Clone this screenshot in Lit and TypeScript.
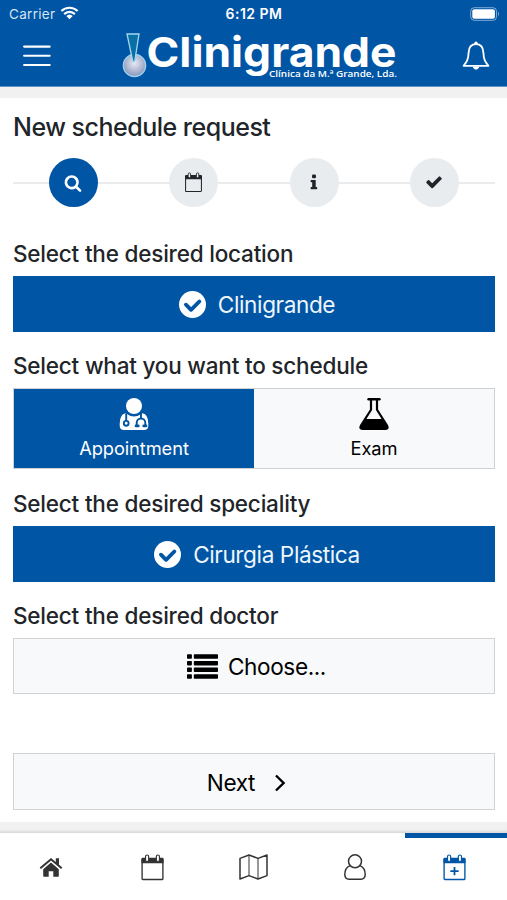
import { LitElement, html, css, svg, nothing } from "lit";
import { customElement, property } from "lit/decorators.js";
import { classMap } from "lit/directives/class-map.js";

const BLUE = "#0055a5";

const calendar = (plus: boolean) => svg`
  <path d="M2 5.5h20v18.2a.8.8 0 0 1-.8.8H2.8a.8.8 0 0 1-.8-.8z" fill="none" stroke="currentColor" stroke-width="1.3"/>
  <path d="M1.4 4.6Q1.4 3.6 2.4 3.6H21.6Q22.6 3.6 22.6 4.6V9H1.4z" fill="currentColor"/>
  <rect x="5.3" y="1" width="3" height="6.2" rx="1.5" fill="var(--hole, #fff)" stroke="currentColor" stroke-width="1.1"/>
  <rect x="15.7" y="1" width="3" height="6.2" rx="1.5" fill="var(--hole, #fff)" stroke="currentColor" stroke-width="1.1"/>
  ${plus ? svg`<path d="M12 12.4v8M8 16.4h8" stroke="currentColor" stroke-width="1.7"/>` : nothing}`;

const icons: Record<string, [string, unknown]> = {
  menu: ["0 0 28 24", svg`<path d="M1.1 2.6h25.6M1.1 11.8h25.6M1.1 21h25.6" stroke="currentColor" stroke-width="2.1" stroke-linecap="round"/>`],
  bell: ["0 0 28 30", svg`
    <path d="M11.2 26a2.9 2.9 0 0 0 5.6 0z" fill="currentColor" stroke="currentColor"/>
    <path d="M14 3.2c-5 0-7.2 3.9-7.4 8.4-.2 7-1.9 9.6-5 13.2h24.8c-3.1-3.6-4.8-6.2-5-13.2-.2-4.5-2.4-8.4-7.4-8.4z" fill="none" stroke="currentColor" stroke-width="1.8" stroke-linejoin="round"/>
    <circle cx="14" cy="2.3" r="1.7" fill="currentColor"/>`],
  wifi: ["0 0 20 15", svg`
    <path d="M1.3 5.4a12.4 12.4 0 0 1 17.4 0M4.3 8.7a8.1 8.1 0 0 1 11.4 0" fill="none" stroke="currentColor" stroke-width="2.3"/>
    <path d="M10 14.2l-3.4-3.5a4.9 4.9 0 0 1 6.8 0z" fill="currentColor"/>`],
  battery: ["0 0 30 14", svg`
    <rect x=".7" y=".7" width="25.8" height="12.6" rx="3.6" fill="none" stroke="#fff" stroke-opacity=".5"/>
    <rect x="2.3" y="2.3" width="22.6" height="9.4" rx="2" fill="#fff"/>
    <path d="M28 4.8q2 2.2 0 4.4z" fill="#fff" fill-opacity=".5"/>`],
  search: ["0 0 1792 1792", svg`<path fill="currentColor" d="M1216 832q0-185-131.5-316.5T768 384 451.5 515.5 320 832t131.5 316.5T768 1280t316.5-131.5T1216 832zm512 832q0 52-38 90t-90 38q-54 0-90-38l-343-342q-179 124-399 124-143 0-273.5-55.5t-225-150-150-225T64 832t55.5-273.5 150-225 225-150T768 128t273.5 55.5 225 150 150 225T1472 832q0 220-124 399l343 343q37 37 37 90z"/>`],
  calendar: ["0 0 24 25", calendar(false)],
  calendarPlus: ["0 0 24 25", calendar(true)],
  info: ["0 0 8 16", svg`<rect x="2" y=".6" width="4" height="3.6" rx="1.2" fill="currentColor"/><path d="M1.2 6h4.5v7h.9q.6 0 .6.6v1q0 .6-.6.6H1.2q-.6 0-.6-.6v-1q0-.6.6-.6h1V8.2h-1q-.6 0-.6-.6v-1q0-.6.6-.6z" fill="currentColor"/>`],
  check: ["0 0 1792 1792", svg`<path fill="currentColor" d="M1671 566q0 40-28 68l-724 724-136 136q-28 28-68 28t-68-28l-136-136-362-362q-28-28-28-68t28-68l136-136q28-28 68-28t68 28l294 295 656-657q28-28 68-28t68 28l136 136q28 28 28 68z"/>`],
  checkCircle: ["0 0 26 26", svg`<circle cx="13" cy="13" r="13" fill="currentColor"/><path d="M6.7 13.2l4.9 4.9 8-8" fill="none" stroke="${BLUE}" stroke-width="3.7" stroke-linecap="round" stroke-linejoin="round"/>`],
  doctor: ["0 0 30 32", svg`
    <path d="M6.5 15.3Q.7 16.5.7 25.5v2.3Q.7 32 5 32h20q4.3 0 4.3-4.2v-2.3q0-9-5.8-10.2Q15 21.5 6.5 15.3z" fill="currentColor"/>
    <circle cx="15" cy="8" r="8" fill="currentColor"/>
    <path d="M7.2 15.5v7.5" stroke="${BLUE}" stroke-width="1.9"/>
    <circle cx="7.2" cy="25.3" r="2.4" fill="currentColor" stroke="${BLUE}" stroke-width="1.9"/>
    <path d="M22 15v5.5M17.7 28v-3.2a4.3 4.3 0 0 1 8.6 0V28" fill="none" stroke="${BLUE}" stroke-width="1.9"/>
    <path d="M17 27.9h2.3M24.7 27.9H27" stroke="${BLUE}" stroke-width="2.7" stroke-linecap="round"/>`],
  flask: ["0 0 30 32", svg`
    <path d="M9.5 1.2h11" stroke="currentColor" stroke-width="2.4" stroke-linecap="round"/>
    <path d="M12 2v9.8L2 27.5Q.3 30.8 3.4 30.8h23.2q3.1 0 1.4-3.3L18 11.8V2" fill="none" stroke="currentColor" stroke-width="2.2"/>
    <path d="M6.8 21h16.4l5 7.6q.8 2.4-1.6 2.4H3.4Q1 31 1.8 28.6z" fill="currentColor"/>`],
  list: ["0 0 31 25", svg`${[0.2, 6.9, 13.6, 20.3].map((y) => svg`<rect x="0" y=${y} width="4.9" height="4.5" rx=".8" fill="currentColor"/><rect x="6.8" y=${y} width="24.2" height="4.5" rx=".8" fill="currentColor"/>`)}`],
  chevron: ["0 0 12 18", svg`<path d="M2 1.5L9.6 9 2 16.5" fill="none" stroke="currentColor" stroke-width="2.4"/>`],
  home: ["0 0 24 20", svg`
    <path d="M12 5.6l7.8 6.6V19q0 .8-.8.8h-4.7v-5.6H9.7v5.6H5q-.8 0-.8-.8v-6.8z" fill="currentColor"/>
    <path d="M1.3 11.2L12 2.2l10.7 9" fill="none" stroke="currentColor" stroke-width="2"/>
    <path d="M16.8 1.2h3.2v7.2l-3.2-2.7z" fill="currentColor"/>`],
  map: ["0 0 29 26", svg`
    <path d="M1 4.4L10 1l9 3.4L28 1v20.6L19 25l-9-3.4L1 25z" fill="none" stroke="currentColor" stroke-width="1.5" stroke-linejoin="round"/>
    <path d="M10 1v20.6M19 4.4V25" stroke="currentColor" stroke-width="1"/>`],
  person: ["0 0 22 26", svg`
    <circle cx="11" cy="7.3" r="6.5" fill="none" stroke="currentColor" stroke-width="1.5"/>
    <path d="M6 11.6Q.8 13.6.8 20.8 1 25.2 5 25.2h12q4 0 4.2-4.4 0-7.2-5.2-9.2" fill="none" stroke="currentColor" stroke-width="1.5"/>`],
};

@customElement("ui-icon")
class UiIcon extends LitElement {
  @property() name = "";
  static styles = css`
    :host { display: block; flex: none; }
    svg { display: block; width: 100%; height: 100%; overflow: visible; }
  `;
  render() {
    const [box, body] = icons[this.name];
    return html`<svg viewBox=${box}>${body}</svg>`;
  }
}

@customElement("app-root")
class AppRoot extends LitElement {
  static styles = css`
    :host {
      display: flex; flex-direction: column; width: 507px; height: 900px; overflow: hidden;
      background: #fff; color: #212529; font-family: Inter, "Liberation Sans", sans-serif;
    }
    * { box-sizing: border-box; }
    header { flex: none; height: 87px; background: #0055a5; color: #fff; border-bottom: 1px solid #5c93c6; }
    .status { display: grid; grid-template-columns: 1fr auto 1fr; align-items: center; height: 27px; padding: 0 7px 0 9px; font-size: 13.5px; }
    .carrier { display: flex; align-items: center; gap: 5px; color: #d3e4f3; letter-spacing: 0.3px; }
    .time { font-weight: 600; font-size: 14px; letter-spacing: 0.5px; margin-right: 1px; }
    .wifi { width: 19px; height: 14px; color: #fff; margin-top: -2px; }
    .battery { width: 30px; height: 14px; justify-self: end; }
    .bar { display: flex; justify-content: space-between; align-items: center; height: 58px; padding: 0 17px 0 23px; }
    .menu { width: 28px; height: 24px; }
    .bell { width: 28px; height: 30px; margin-top: -1px; }
    .logo { width: 276px; height: 48px; overflow: visible; margin: 0 0 3px 7px; }
    .word { font: 700 41px Inter, sans-serif; fill: #fff; }
    .sub { font: 600 9.5px "Open Sans", sans-serif; fill: #fff; }
    .strip { flex: none; height: 11px; background: #f1f1f1; }
    main { flex: none; height: 724px; padding: 13px 12px 0 13px; }
    h1 { margin: 0; height: 32px; font-size: 25px; line-height: 32px; font-weight: 500; letter-spacing: -0.5px; white-space: nowrap; }
    .steps { display: grid; grid-template-columns: repeat(4, 1fr); justify-items: center; margin-top: 15px; height: 49px;
      background: linear-gradient(#e9ebed, #e9ebed) 0 24px / 100% 2px no-repeat; }
    .step { display: grid; place-items: center; width: 49px; height: 49px; border-radius: 50%; background: #e9ecef; --hole: #e9ecef; }
    .step.on { background: #0055a5; color: #fff; }
    .s-search { width: 18px; height: 18px; }
    .s-calendar { width: 19px; height: 20px; margin-top: -2px; }
    .s-info { width: 8px; height: 16px; margin-top: -2px; }
    .s-check { width: 18px; height: 18px; margin: -2px 2px 0 0; }
    h2 { margin: 0 0 8px; height: 30px; font-size: 22.5px; line-height: 31px; font-weight: 500; white-space: nowrap; letter-spacing: -0.2px; }
    .s1 { margin-top: 31px; }
    .s2 { margin-top: 18px; }
    .s3 { margin-top: 19px; }
    .s4 { margin-top: 18px; }
    .btn { display: flex; align-items: center; justify-content: center; height: 56px; padding: 1px 0 0 5px; background: #f8f9fa; border: 1px solid #cfd1d3; color: #000; font-size: 22.6px; letter-spacing: -0.4px; white-space: nowrap; }
    .btn.on { padding-left: 6px; background: #0055a5; border-color: #0055a5; color: #eef6fc; }
    .tick { width: 27px; height: 27px; color: #fff; margin-right: 12px; }
    .list { width: 31px; height: 25px; margin-right: 10px; }
    .chev { width: 12px; height: 18px; margin-left: 19px; margin-top: 2px; }
    .next { margin-top: 59px; height: 57px; padding: 1px 15px 0 0; }
    .pair { display: grid; grid-template-columns: 1fr 1fr; height: 81px; border: 1px solid #cfd1d3; }
    .opt { display: flex; flex-direction: column; align-items: center; padding-top: 9px; background: #f8f9fa; color: #000; font-size: 18.3px; letter-spacing: -0.1px; line-height: 24px; }
    .opt.on { background: #0055a5; color: #fff; }
    .opt ui-icon { width: 30px; height: 32px; margin-bottom: 6px; }
    .strip.low { height: 11px; background: linear-gradient(#f1f1f1 65%, #d9d9d9); }
    nav { flex: 1; display: grid; grid-template-columns: repeat(4, 101.2px) 1fr; color: #333; background: #fff; }
    .tab { display: grid; place-items: center; border-top: 5px solid transparent; padding: 0 0 5px 1.5px; }
    .tab.on { color: #0055a5; border-color: #0055a5; padding: 0 2px 5px 0; }
    .t-home { width: 24px; height: 20px; }
    .t-calendar, .t-calendarPlus { width: 25px; height: 26px; }
    .t-map { width: 29px; height: 26px; }
    .t-person { width: 22px; height: 26px; }
  `;

  render() {
    return html`
      <header>
        <div class="status">
          <span class="carrier"><span>Carrier</span><ui-icon class="wifi" name="wifi"></ui-icon></span>
          <span class="time">6:12 PM</span>
          <ui-icon class="battery" name="battery"></ui-icon>
        </div>
        <div class="bar">
          <ui-icon class="menu" name="menu"></ui-icon>
          <svg class="logo" viewBox="0 0 276 48">
            <defs>
              <radialGradient id="ball" cx=".5" cy=".4" r=".6">
                <stop offset="0" stop-color="#e9e9f1"/><stop offset="1" stop-color="#8795bb"/>
              </radialGradient>
            </defs>
            <circle cx="12.5" cy="34.5" r="11.2" fill="url(#ball)" stroke="#9ed5ee" stroke-width="1.2"/>
            <path d="M5 3h12L12.7 30.5h-1.9z" fill="#0870a5" stroke="#a3d7ee" stroke-width="1.3"/>
            <text class="word" x="24.5" y="36" textLength="250" lengthAdjust="spacingAndGlyphs">Clinigrande</text>
            <text class="sub" x="147" y="46.3" textLength="128" lengthAdjust="spacingAndGlyphs">Clínica da M.ª Grande, Lda.</text>
          </svg>
          <ui-icon class="bell" name="bell"></ui-icon>
        </div>
      </header>
      <div class="strip"></div>
      <main>
        <h1>New schedule request</h1>
        <div class="steps">
          ${["search", "calendar", "info", "check"].map((n, i) => html`
            <div class=${classMap({ step: true, on: i === 0 })}><ui-icon class="s-${n}" name=${n}></ui-icon></div>`)}
        </div>
        <section class="s1">
          <h2>Select the desired location</h2>
          <div class="btn on"><ui-icon class="tick" name="checkCircle"></ui-icon><span>Clinigrande</span></div>
        </section>
        <section class="s2">
          <h2>Select what you want to schedule</h2>
          <div class="pair">
            <div class="opt on"><ui-icon name="doctor"></ui-icon><span>Appointment</span></div>
            <div class="opt"><ui-icon name="flask"></ui-icon><span>Exam</span></div>
          </div>
        </section>
        <section class="s3">
          <h2>Select the desired speciality</h2>
          <div class="btn on"><ui-icon class="tick" name="checkCircle"></ui-icon><span>Cirurgia Plástica</span></div>
        </section>
        <section class="s4">
          <h2>Select the desired doctor</h2>
          <div class="btn"><ui-icon class="list" name="list"></ui-icon><span>Choose...</span></div>
        </section>
        <div class="btn next"><span>Next</span><ui-icon class="chev" name="chevron"></ui-icon></div>
      </main>
      <div class="strip low"></div>
      <nav>
        ${["home", "calendar", "map", "person", "calendarPlus"].map((n, i) => html`
          <div class=${classMap({ tab: true, on: i === 4 })}><ui-icon class="t-${n}" name=${n}></ui-icon></div>`)}
      </nav>
    `;
  }
}
